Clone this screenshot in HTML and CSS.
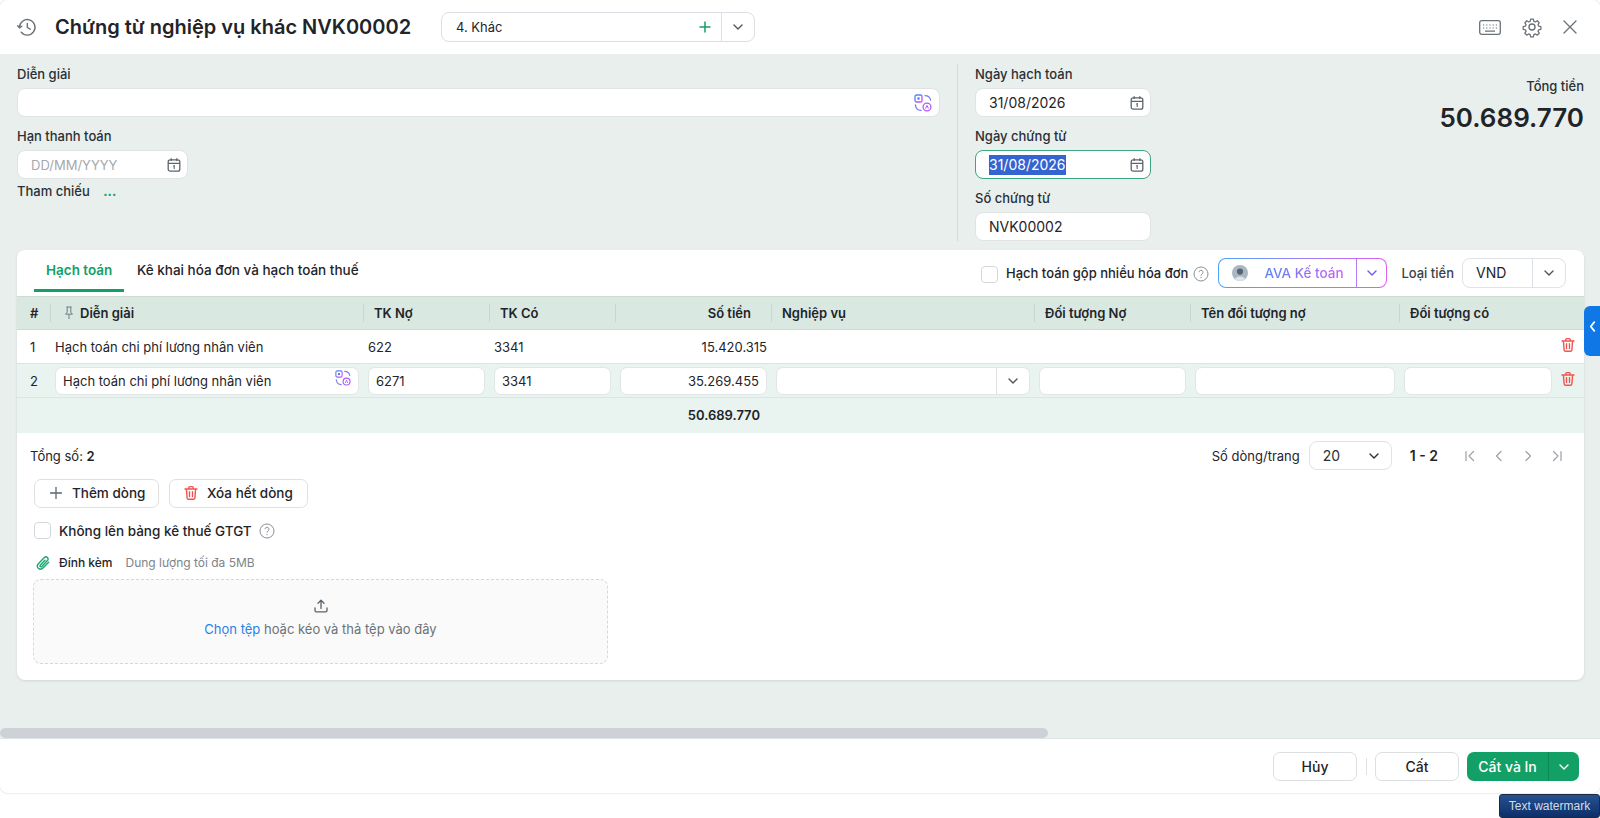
FILE: index.html
```html
<!DOCTYPE html>
<html lang="en">
<head>
  <meta charset="UTF-8" />
  <meta name="viewport" content="width=device-width, initial-scale=1.0" />
  <title>Chứng từ nghiệp vụ khác</title>
  <link rel="stylesheet" href="styles.css">
</head>
<body>
  <!-- shared icons -->
  <svg class="defs" width="0" height="0">
    <defs>
      <linearGradient id="aiGrad" x1="0" y1="0" x2="1" y2="1">
        <stop offset="0" stop-color="#3f8cf5" />
        <stop offset="1" stop-color="#d24bf5" />
      </linearGradient>
    </defs>
    <symbol id="i-cal" viewBox="0 0 16 16">
      <rect x="2.2" y="2.8" width="11.6" height="11.4" rx="2" fill="none" stroke="currentColor" stroke-width="1.3" />
      <path d="M2.2 6.3h11.6M5.2 1.3v2.6M10.8 1.3v2.6" fill="none" stroke="currentColor" stroke-width="1.3" />
      <path d="M7.2 9.2l1-.6v3.4" fill="none" stroke="currentColor" stroke-width="1.1" />
    </symbol>
    <symbol id="i-down" viewBox="0 0 12 12">
      <path d="M2 4l4 4 4-4" fill="none" stroke="currentColor" stroke-width="1.4" stroke-linecap="round" stroke-linejoin="round" />
    </symbol>
    <symbol id="i-trash" viewBox="0 0 16 16">
      <path d="M2 4h12M5.8 3.8V2.6c0-.6.4-1 1-1h2.4c.6 0 1 .4 1 1v1.2M3.4 4l.7 9c.1.8.6 1.3 1.4 1.3h5c.8 0 1.3-.5 1.4-1.3l.7-9M6.5 6.8v4.8M9.5 6.8v4.8" fill="none" stroke="#f0544f" stroke-width="1.4" stroke-linecap="round" />
    </symbol>
    <symbol id="i-help" viewBox="0 0 16 16">
      <circle cx="8" cy="8" r="7" fill="none" stroke="#8a9097" stroke-width="1" />
      <path d="M6 6.2a2 2 0 1 1 3 1.8c-.7.4-1 .8-1 1.6" fill="none" stroke="#8a9097" stroke-width="1" />
      <circle cx="8" cy="11.6" r=".7" fill="#8a9097" />
    </symbol>
    <symbol id="i-ai" viewBox="0 0 18 18">
      <rect x="1" y="1" width="7" height="7" rx="1.6" fill="none" stroke="url(#aiGrad)" stroke-width="1.3" />
      <rect x="3.4" y="3.4" width="2.2" height="2.2" fill="#5a6ff0" />
      <circle cx="13" cy="13" r="3.9" fill="none" stroke="#b05cf5" stroke-width="1.3" />
      <path d="M11.6 14.6l1.4-3.2 1.4 3.2" fill="none" stroke="#b05cf5" stroke-width="1" />
      <path d="M11 1.6c2.6 0 5 1.4 5.6 4.6M1.4 11c.4 3 2.6 5.4 5.6 5.4" fill="none" stroke="#7a7cf5" stroke-width="1.3" stroke-linecap="round" />
    </symbol>
  </svg>

  <div class="modal">
    <header class="modal-head">
      <svg class="head-history" viewBox="0 0 24 24" width="20" height="20">
        <path d="M5 18.2A9.3 9.3 0 1 0 3 12.6" fill="none" stroke="currentColor" stroke-width="1.7" stroke-linecap="round" />
        <path d="M.8 10.6l2.2 2.4 2.7-1.9" fill="none" stroke="currentColor" stroke-width="1.7" stroke-linecap="round" stroke-linejoin="round" />
        <path d="M12.4 7.6v5l3.4 2" fill="none" stroke="currentColor" stroke-width="1.7" stroke-linecap="round" stroke-linejoin="round" />
      </svg>
      <h1 class="head-title">Chứng từ nghiệp vụ khác NVK00002</h1>
      <div class="head-select">
        <span class="head-select-text">4. Khác</span>
        <svg class="head-plus" viewBox="0 0 14 14" width="14" height="14"><path d="M7 1.5v11M1.5 7h11" stroke="#12a067" stroke-width="1.5" /></svg>
        <span class="select-arrow"><svg width="12" height="12"><use href="#i-down" /></svg></span>
      </div>
      <div class="head-tools">
        <svg viewBox="0 0 22 15" width="22" height="15">
          <rect x=".7" y=".7" width="20.6" height="13.6" rx="2" fill="none" stroke="currentColor" stroke-width="1.3" />
          <path d="M4 5h1.2M7.2 5h1.2M10.4 5h1.2M13.6 5h1.2M16.8 5H18M4 8h1.2M7.2 8h1.2M10.4 8h1.2M13.6 8h1.2M16.8 8H18M6 11.2h10" stroke="currentColor" stroke-width="1.2" />
        </svg>
        <svg viewBox="0 0 24 24" width="22" height="22">
          <path d="M10.3 2.5h3.4l.6 2.8 1.9.8 2.4-1.5 2.4 2.4-1.5 2.4.8 1.9 2.8.6v3.4l-2.8.6-.8 1.9 1.5 2.4-2.4 2.4-2.4-1.5-1.9.8-.6 2.8h-3.4l-.6-2.8-1.9-.8-2.4 1.5-2.4-2.4 1.5-2.4-.8-1.9-2.8-.6v-3.4l2.8-.6.8-1.9-1.5-2.4 2.4-2.4 2.4 1.5 1.9-.8z" transform="translate(1.6 1.2) scale(.87)" fill="none" stroke="currentColor" stroke-width="1.6" stroke-linejoin="round" />
          <circle cx="12" cy="12" r="3.3" fill="none" stroke="currentColor" stroke-width="1.5" />
        </svg>
        <svg viewBox="0 0 14 14" width="14" height="14"><path d="M1 1l12 12M13 1L1 13" stroke="currentColor" stroke-width="1.3" stroke-linecap="round" /></svg>
      </div>
    </header>

    <main class="modal-body">
      <section class="form">
        <div class="form-left">
          <div class="field">
            <label class="field-label">Diễn giải</label>
            <div class="box box-wide"><svg class="ai-icon" width="18" height="18"><use href="#i-ai" /></svg></div>
          </div>
          <div class="field">
            <label class="field-label">Hạn thanh toán</label>
            <div class="box box-date box-short">
              <span class="placeholder">DD/MM/YYYY</span>
              <svg class="cal-icon" width="16" height="16"><use href="#i-cal" /></svg>
            </div>
          </div>
          <div class="ref-row">Tham chiếu <span class="ref-more">...</span></div>
        </div>
        <div class="form-right">
          <div class="field">
            <label class="field-label">Ngày hạch toán</label>
            <div class="box box-date">31/08/2026<svg class="cal-icon" width="16" height="16"><use href="#i-cal" /></svg></div>
          </div>
          <div class="field">
            <label class="field-label">Ngày chứng từ</label>
            <div class="box box-date box-focus"><span class="selected">31/08/2026</span><svg class="cal-icon" width="16" height="16"><use href="#i-cal" /></svg></div>
          </div>
          <div class="field">
            <label class="field-label">Số chứng từ</label>
            <div class="box box-date">NVK00002</div>
          </div>
        </div>
        <div class="form-total">
          <div class="total-label">Tổng tiền</div>
          <div class="total-value">50.689.770</div>
        </div>
      </section>

      <section class="card">
        <div class="tabbar">
          <div class="tab tab-active">Hạch toán</div>
          <div class="tab">Kê khai hóa đơn và hạch toán thuế</div>
          <div class="tabbar-right">
            <span class="check"></span>
            <span class="tabbar-label">Hạch toán gộp nhiều hóa đơn</span>
            <svg class="help-icon" width="16" height="16"><use href="#i-help" /></svg>
            <div class="ava-btn">
              <span class="ava-main">
                <svg class="ava-face" viewBox="0 0 16 16" width="16" height="16">
                  <circle cx="8" cy="8" r="8" fill="#a9b6c4" />
                  <circle cx="8" cy="6.6" r="3.1" fill="#59636e" />
                  <path d="M3 14c1-3.4 9-3.4 10 0a8 8 0 0 1-10 0z" fill="#dfe5ea" />
                </svg>
                <span class="ava-text">AVA Kế toán</span>
              </span>
              <span class="ava-arrow"><svg width="12" height="12"><use href="#i-down" /></svg></span>
            </div>
            <span class="currency-label">Loại tiền</span>
            <div class="currency">
              <span class="currency-text">VND</span>
              <span class="select-arrow"><svg width="12" height="12"><use href="#i-down" /></svg></span>
            </div>
          </div>
        </div>

        <table class="grid">
          <colgroup>
            <col class="c-no"><col class="c-desc"><col class="c-acc"><col class="c-acc"><col class="c-amount"><col class="c-biz"><col class="c-obj"><col class="c-name"><col class="c-obj2"><col class="c-del">
          </colgroup>
          <thead>
            <tr>
              <th class="no">#</th>
              <th class="th-desc">
                <svg class="pin" viewBox="0 0 10 14" width="10" height="14"><path d="M2.4 1h5.2M3.2 1v5.2L1.6 8.2h6.8L6.8 6.2V1M5 8.4V13" fill="none" stroke="#6f7a80" stroke-width="1" /></svg>Diễn giải
              </th>
              <th>TK Nợ</th>
              <th>TK Có</th>
              <th class="th-amount">Số tiền</th>
              <th>Nghiệp vụ</th>
              <th>Đối tượng Nợ</th>
              <th>Tên đối tượng nợ</th>
              <th>Đối tượng có</th>
              <th class="th-del"></th>
            </tr>
          </thead>
          <tbody>
            <tr>
              <td class="no">1</td>
              <td>Hạch toán chi phí lương nhân viên</td>
              <td>622</td>
              <td>3341</td>
              <td class="amount">15.420.315</td>
              <td></td><td></td><td></td><td></td>
              <td class="del"><svg width="16" height="16"><use href="#i-trash" /></svg></td>
            </tr>
            <tr class="row-edit">
              <td class="no">2</td>
              <td><div class="cell-box cell-desc">Hạch toán chi phí lương nhân viên<svg class="cell-ai" width="16" height="16"><use href="#i-ai" /></svg></div></td>
              <td><div class="cell-box">6271</div></td>
              <td><div class="cell-box">3341</div></td>
              <td><div class="cell-box cell-amount">35.269.455</div></td>
              <td><div class="cell-box cell-select"><span class="select-arrow"><svg width="12" height="12"><use href="#i-down" /></svg></span></div></td>
              <td><div class="cell-box"></div></td>
              <td><div class="cell-box"></div></td>
              <td><div class="cell-box"></div></td>
              <td class="del"><svg width="16" height="16"><use href="#i-trash" /></svg></td>
            </tr>
          </tbody>
          <tfoot>
            <tr>
              <td colspan="5" class="foot-amount">50.689.770</td>
              <td colspan="5"></td>
            </tr>
          </tfoot>
        </table>

        <div class="pager">
          <div>Tổng số: <b>2</b></div>
          <div class="pager-right">
            <span>Số dòng/trang</span>
            <div class="page-size">20<svg width="12" height="12"><use href="#i-down" /></svg></div>
            <b class="page-range">1 - 2</b>
            <div class="page-nav">
              <svg viewBox="0 0 12 12" width="12" height="12"><path d="M2 1.5v9M9.5 1.5L5 6l4.5 4.5" /></svg>
              <svg viewBox="0 0 12 12" width="12" height="12"><path d="M8 1.5L3.5 6 8 10.5" /></svg>
              <svg viewBox="0 0 12 12" width="12" height="12"><path d="M4 1.5L8.5 6 4 10.5" /></svg>
              <svg viewBox="0 0 12 12" width="12" height="12"><path d="M10 1.5v9M2.5 1.5L7 6l-4.5 4.5" /></svg>
            </div>
          </div>
        </div>

        <div class="row-actions">
          <button class="btn btn-add">
            <svg viewBox="0 0 14 14" width="14" height="14"><path d="M7 1v12M1 7h12" stroke="#5c6770" stroke-width="1.3" /></svg>Thêm dòng
          </button>
          <button class="btn btn-clear"><svg width="16" height="16"><use href="#i-trash" /></svg>Xóa hết dòng</button>
        </div>

        <div class="row-vat">
          <span class="check"></span>
          <span class="vat-text">Không lên bảng kê thuế GTGT</span>
          <svg class="help-icon" width="16" height="16"><use href="#i-help" /></svg>
        </div>

        <div class="row-attach">
          <svg viewBox="0 0 16 16" width="16" height="16">
            <path d="M13.6 7.2l-5.4 5.6c-1.5 1.5-3.6 1.6-4.9.4-1.3-1.3-1.2-3.3.3-4.8l5.5-5.7c1-1 2.4-1.1 3.3-.2.9.9.8 2.3-.2 3.3l-5.4 5.6c-.5.5-1.2.6-1.6.2-.4-.4-.3-1.1.2-1.6L10 5.3" fill="none" stroke="#1ba56f" stroke-width="1.4" stroke-linecap="round" />
          </svg>
          <span class="attach-label">Đính kèm</span>
          <span class="attach-hint">Dung lượng tối đa 5MB</span>
        </div>

        <div class="dropzone">
          <svg viewBox="0 0 14 14" width="14" height="14">
            <path d="M7 9.4V1.4M4 4.2l3-3 3 3M1 9v2.4c0 .9.6 1.4 1.4 1.4h9.2c.8 0 1.4-.5 1.4-1.4V9" fill="none" stroke="#59636b" stroke-width="1.3" stroke-linecap="round" stroke-linejoin="round" />
          </svg>
          <div class="drop-text"><span class="drop-link">Chọn tệp</span> hoặc kéo và thả tệp vào đây</div>
        </div>
      </section>

      <div class="hscroll"><div class="hscroll-thumb"></div></div>
    </main>

    <footer class="modal-foot">
      <button class="foot-btn">Hủy</button>
      <span class="foot-sep"></span>
      <button class="foot-btn">Cất</button>
      <div class="save-print">
        <span class="save-print-main">Cất và In</span>
        <span class="save-print-arrow"><svg width="12" height="12"><use href="#i-down" /></svg></span>
      </div>
    </footer>
  </div>

  <div class="side-tab">
    <svg viewBox="0 0 8 12" width="7" height="11"><path d="M6 1L2 6l4 5" fill="none" stroke="#fff" stroke-width="2" stroke-linecap="round" stroke-linejoin="round" /></svg>
  </div>
  <div class="watermark">Text watermark</div>
</body>
</html>
```

FILE: styles.css
```css
* {
  box-sizing: border-box;
}
body {
  margin: 0;
  width: 1600px;
  height: 818px;
  overflow: hidden;
  position: relative;
  background: #fff;
  color: #1f2429;
  font-family: Inter, "Noto Sans", sans-serif;
  font-size: 14px;
  line-height: 20px;
}
.defs {
  position: absolute;
}
button {
  font: inherit;
  color: inherit;
  cursor: pointer;
}

/* modal frame */
.modal {
  height: 793px;
  display: flex;
  flex-direction: column;
  border-radius: 8px;
  overflow: hidden;
  box-shadow: 0 0 2px rgba(0, 0, 0, 0.25);
}
.modal-head {
  height: 54px;
  flex: none;
  display: flex;
  align-items: center;
  padding-left: 17px;
  background: #fff;
}
.head-history {
  color: #6a7278;
  flex: none;
}
.head-title {
  margin: 0 0 0 18px;
  width: 386px;
  font-size: 20px;
  line-height: 28px;
  font-weight: 600;
  white-space: nowrap;
}
.head-select {
  width: 314px;
  height: 30px;
  display: flex;
  align-items: center;
  background: #fff;
  border: 1px solid #dcdfe3;
  border-radius: 8px;
}
.head-select-text {
  flex: 1;
  padding-left: 14px;
  font-size: 13px;
}
.head-plus {
  margin-right: 9px;
}
.select-arrow {
  width: 33px;
  height: 100%;
  display: flex;
  align-items: center;
  justify-content: center;
  border-left: 1px solid #dcdfe3;
  color: #4d565d;
}
.head-tools {
  margin-left: auto;
  padding-right: 23px;
  display: flex;
  align-items: center;
  gap: 20px;
  color: #6a7278;
}

/* body */
.modal-body {
  flex: 1;
  display: flex;
  flex-direction: column;
  background: #e9efed;
  min-height: 0;
}
.form {
  height: 196px;
  flex: none;
  display: flex;
  padding: 10px 16px 0 17px;
}
.form-left {
  width: 923px;
}
.form-right {
  width: 193px;
  margin-left: 17px;
  padding-left: 17px;
  height: 177px;
  border-left: 1px solid #d5dbd9;
  flex: none;
}
.field {
  margin-bottom: 9px;
}
.field-label {
  display: block;
  height: 20px;
  margin-bottom: 4px;
  font-size: 13px;
  font-weight: 500;
  color: #2a3036;
}
.box {
  height: 29px;
  width: 176px;
  display: flex;
  align-items: center;
  background: #fff;
  border: 1px solid #dfe3e5;
  border-radius: 8px;
}
.box-wide {
  width: 923px;
  justify-content: flex-end;
  padding-right: 7px;
}
.box-date {
  padding-left: 13px;
  padding-right: 5px;
}
.box-short {
  width: 171px;
}
.box-focus {
  border-color: #3ba67f;
}
.selected {
  background: #3563cf;
  color: #fff;
}
.placeholder {
  font-size: 13px;
  color: #a4a9ae;
}
.cal-icon {
  margin-left: auto;
  color: #5c656c;
}
.ai-icon {
  flex: none;
}
.ref-row {
  margin-top: -7px;
  font-size: 13px;
  font-weight: 500;
  color: #2a3036;
}
.ref-more {
  margin-left: 10px;
  color: #12a067;
  font-weight: 700;
}
.form-total {
  flex: 1;
  text-align: right;
  padding-top: 12px;
}
.total-label {
  font-size: 13px;
  font-weight: 500;
  color: #2a3036;
}
.total-value {
  margin-top: 5px;
  font-size: 26px;
  line-height: 34px;
  font-weight: 600;
}

/* card */
.card {
  width: 1567px;
  height: 430px;
  flex: none;
  margin-left: 17px;
  background: #fff;
  border-radius: 8px;
  box-shadow: 0 1px 3px rgba(0, 0, 0, 0.1);
}
.tabbar {
  height: 46px;
  display: flex;
  padding-left: 17px;
}
.tab {
  height: 42px;
  padding: 0 12px;
  line-height: 40px;
  font-size: 13.5px;
  font-weight: 500;
  white-space: nowrap;
}
.tab-active {
  width: 90px;
  color: #12a067;
  border-bottom: 3px solid #12a067;
  font-weight: 600;
}
.tab + .tab {
  padding-left: 13px;
}
.tabbar-right {
  margin-left: auto;
  padding: 8px 18px 0 0;
  display: flex;
  align-items: flex-start;
}
.check {
  width: 17px;
  height: 17px;
  flex: none;
  background: #fff;
  border: 1px solid #d4d8dc;
  border-radius: 4px;
}
.tabbar-right .check {
  margin-top: 8px;
}
.tabbar-label {
  margin: 5px 0 0 8px;
  font-size: 13px;
  font-weight: 500;
  white-space: nowrap;
}
.tabbar-right .help-icon {
  margin: 8px 0 0 5px;
}
.ava-btn {
  width: 169px;
  height: 30px;
  margin-left: 9px;
  display: flex;
  border: 1px solid transparent;
  border-radius: 8px;
  background: linear-gradient(#fff, #fff) padding-box, linear-gradient(90deg, #4ea3f5, #e05ef2) border-box;
}
.ava-main {
  width: 138px;
  display: flex;
  align-items: center;
  padding-left: 13px;
  border-right: 1px solid #b67af5;
}
.ava-face {
  flex: none;
}
.ava-text {
  margin-left: 16px;
  font-size: 13.5px;
  font-weight: 500;
  background: linear-gradient(90deg, #5a86f6, #c95cf4);
  -webkit-background-clip: text;
  background-clip: text;
  color: transparent;
}
.ava-arrow {
  flex: 1;
  display: flex;
  align-items: center;
  justify-content: center;
  color: #6c5cf0;
}
.currency-label {
  margin: 5px 0 0 14px;
  font-size: 13px;
  font-weight: 500;
  white-space: nowrap;
  color: #3b4248;
}
.currency {
  width: 104px;
  height: 30px;
  margin-left: 8px;
  display: flex;
  align-items: center;
  border: 1px solid #dfe3e5;
  border-radius: 8px;
}
.currency-text {
  flex: 1;
  padding-left: 13px;
}

/* table */
.grid {
  width: 1567px;
  table-layout: fixed;
  border-collapse: collapse;
}
.c-no { width: 33px; }
.c-desc { width: 313px; }
.c-acc { width: 126px; }
.c-amount { width: 156px; }
.c-biz { width: 263px; }
.c-obj { width: 156px; }
.c-name { width: 209px; }
.c-obj2 { width: 157px; }
.c-del { width: 28px; }
.grid th {
  position: relative;
  height: 33px;
  padding: 0 11px;
  text-align: left;
  font-size: 13px;
  font-weight: 600;
  background: #d9e8e1;
  border-top: 1px solid #cfdcd6;
  border-bottom: 1px solid #cfdcd6;
  white-space: nowrap;
}
.grid th::after {
  content: "";
  position: absolute;
  left: 0;
  top: 7px;
  bottom: 7px;
  width: 1px;
  background: #c8d6d0;
}
.grid th.no::after,
.grid th.th-del::after {
  display: none;
}
.grid .no {
  padding: 0;
  text-align: left;
  padding-left: 13px;
}
.th-desc {
  padding-left: 14px !important;
}
.pin {
  vertical-align: -2px;
  margin-right: 6px;
}
.th-amount {
  text-align: right !important;
  padding-right: 20px !important;
}
.grid td {
  height: 34px;
  padding: 0 5px;
  font-size: 13px;
  border-bottom: 1px solid #dde5e2;
  white-space: nowrap;
}
.grid td.amount {
  text-align: right;
  padding-right: 4px;
}
.row-edit td {
  background: #e9f3ef;
  padding: 0 4px 0 5px;
}
.del {
  padding: 0 !important;
  vertical-align: middle;
}
.del svg {
  display: block;
  margin: -4px 0 0 4px;
}
.cell-box {
  height: 28px;
  display: flex;
  align-items: center;
  padding: 0 7px;
  background: #fff;
  border: 1px solid #e1e6e6;
  border-radius: 7px;
}
.cell-desc {
  position: relative;
}
.cell-ai {
  position: absolute;
  right: 7px;
  top: 2px;
}
.cell-amount {
  justify-content: flex-end;
}
.cell-select {
  justify-content: flex-end;
  padding: 0;
}
.grid tfoot td {
  height: 35px;
  background: #e9f3ef;
  border-bottom: 0;
}
.foot-amount {
  text-align: right;
  padding-right: 11px !important;
  font-weight: 600;
}

/* pager */
.pager {
  height: 46px;
  display: flex;
  align-items: center;
  justify-content: space-between;
  padding: 0 21px 0 13px;
  font-size: 13px;
}
.pager b {
  font-weight: 600;
}
.pager-right {
  display: flex;
  align-items: center;
}
.page-size {
  width: 83px;
  height: 29px;
  margin-left: 9px;
  display: flex;
  align-items: center;
  justify-content: space-between;
  padding: 0 11px 0 13px;
  font-size: 14px;
  border: 1px solid #dfe3e5;
  border-radius: 8px;
  color: #2a3036;
}
.page-range {
  margin-left: 18px;
  font-size: 14px;
}
.page-nav {
  margin-left: 26px;
  display: flex;
  gap: 17px;
}
.page-nav svg {
  fill: none;
  stroke: #9aa1a7;
  stroke-width: 1.2;
  stroke-linecap: round;
  stroke-linejoin: round;
}

.row-actions {
  display: flex;
  gap: 10px;
  margin-left: 17px;
}
.btn {
  height: 29px;
  display: flex;
  align-items: center;
  background: #fff;
  border: 1px solid #dde1e4;
  border-radius: 7px;
  font-size: 13.5px;
  font-weight: 500;
  white-space: nowrap;
}
.btn-add {
  width: 125px;
  padding-left: 14px;
  gap: 9px;
}
.btn-clear {
  width: 139px;
  padding-left: 13px;
  gap: 8px;
}
.row-vat {
  display: flex;
  align-items: center;
  margin: 14px 0 0 17px;
  height: 18px;
}
.vat-text {
  margin-left: 8px;
  font-size: 13.5px;
  font-weight: 500;
}
.row-vat .help-icon {
  margin-left: 7px;
}
.row-attach {
  display: flex;
  align-items: center;
  margin: 14px 0 0 18px;
  height: 18px;
  font-size: 12px;
}
.attach-label {
  margin-left: 8px;
  font-weight: 500;
}
.attach-hint {
  margin-left: 13px;
  color: #7d848a;
}
.dropzone {
  width: 575px;
  height: 85px;
  margin: 7px 0 0 16px;
  display: flex;
  flex-direction: column;
  align-items: center;
  padding-top: 19px;
  background: #fafafa;
  border: 1px dashed #d5d8db;
  border-radius: 8px;
}
.drop-text {
  margin-top: 6px;
  font-size: 13px;
  color: #6b7278;
}
.drop-link {
  color: #2b7fe8;
}

/* scrollbar */
.hscroll {
  margin-top: auto;
  height: 10px;
}
.hscroll-thumb {
  width: 1048px;
  height: 10px;
  background: #ced2d6;
  border-radius: 5px;
}

/* footer */
.modal-foot {
  height: 55px;
  flex: none;
  display: flex;
  justify-content: flex-end;
  align-items: flex-start;
  padding: 13px 21px 0 0;
  background: #fff;
  border-top: 1px solid #e0e4e6;
}
.foot-btn {
  width: 84px;
  height: 29px;
  padding: 0;
  background: #fff;
  border: 1px solid #dcdfe2;
  border-radius: 7px;
  font-weight: 500;
}
.foot-btn + .foot-btn {
  margin-left: 0;
}
.foot-sep {
  width: 1px;
  height: 17px;
  margin: 6px 8px 0 9px;
  background: #e0e3e5;
}
.save-print {
  width: 112px;
  height: 29px;
  margin-left: 8px;
  display: flex;
  color: #fff;
  background: #12a067;
  border-radius: 7px;
  font-weight: 500;
}
.save-print-main {
  width: 82px;
  text-align: center;
  line-height: 29px;
  border-right: 1px solid #0d8856;
}
.save-print-arrow {
  flex: 1;
  display: flex;
  align-items: center;
  justify-content: center;
}

/* overlays */
.side-tab {
  position: absolute;
  right: 0;
  top: 306px;
  width: 16px;
  height: 50px;
  display: flex;
  align-items: center;
  justify-content: center;
  padding-bottom: 10px;
  background: #0f78e6;
  border-radius: 6px 0 0 6px;
}
.watermark {
  position: absolute;
  right: 0;
  bottom: 0;
  width: 101px;
  height: 24px;
  text-align: center;
  line-height: 22px;
  font-size: 12px;
  color: #d4dbe6;
  font-family: "Liberation Sans", sans-serif;
  background: linear-gradient(#26518f, #0d2f6b);
  border: 1px solid #1b2a44;
  border-radius: 3px;
}
```
